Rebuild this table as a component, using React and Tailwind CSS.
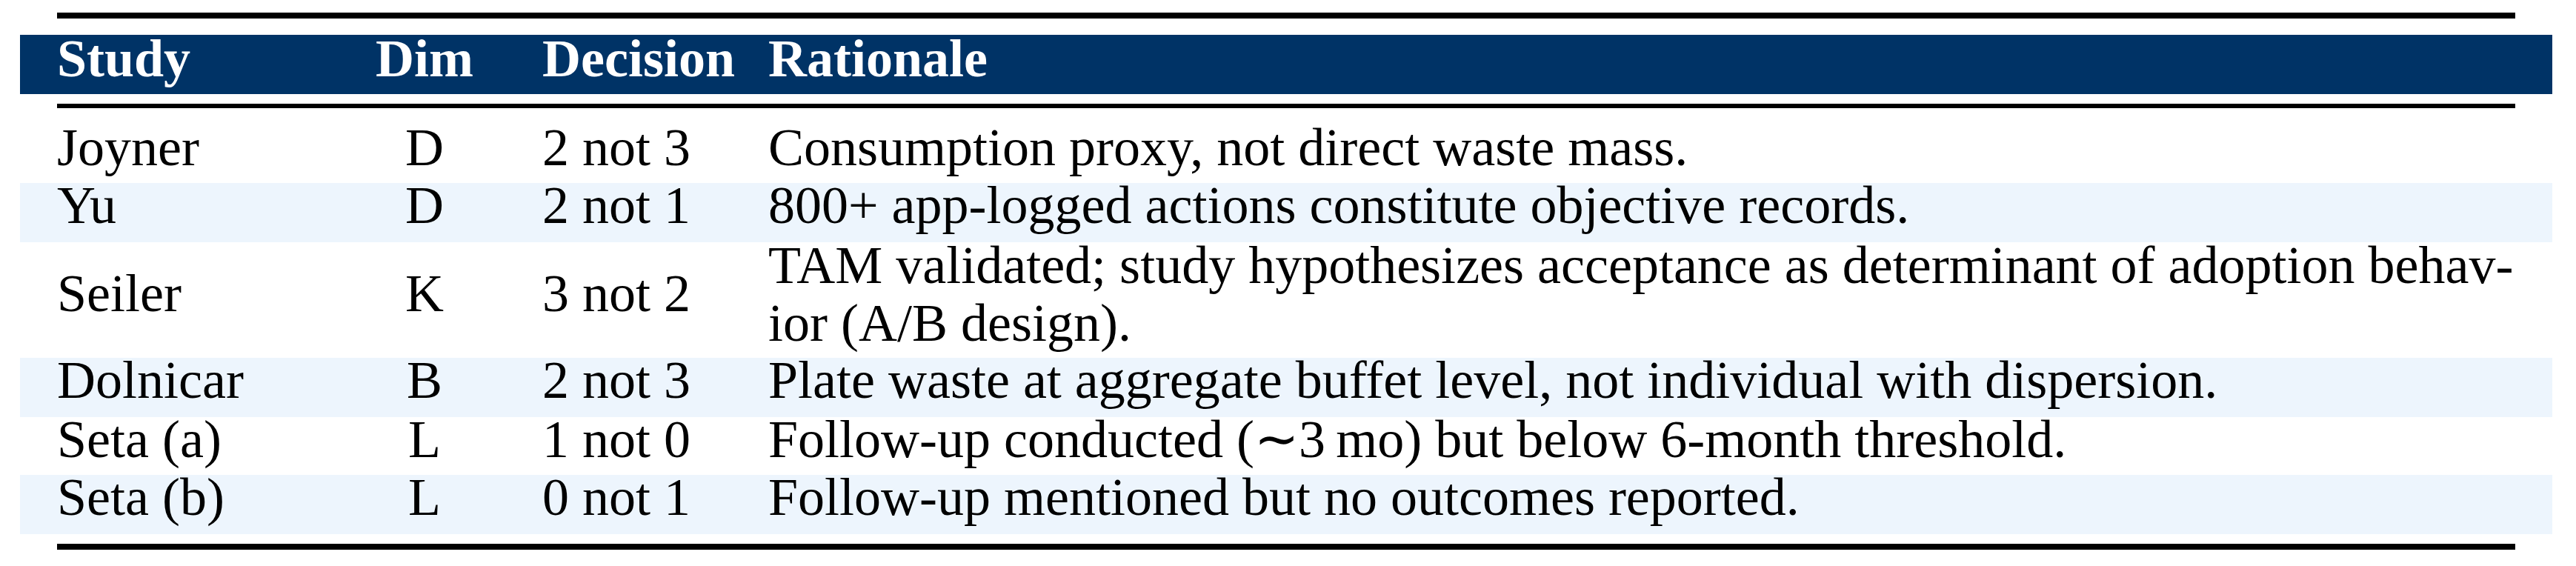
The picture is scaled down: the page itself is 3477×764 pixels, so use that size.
const ROWS = [
  { study: 'Joyner', dim: 'D', decision: '2 not 3', rationale: ['Consumption proxy, not direct waste mass.'], h: 'h-[78px]', shaded: false },
  { study: 'Yu', dim: 'D', decision: '2 not 1', rationale: ['800+ app-logged actions constitute objective records.'], h: 'h-[80px]', shaded: true },
  {
    study: 'Seiler',
    dim: 'K',
    decision: '3 not 2',
    rationale: [
      'TAM validated; study hypothesizes acceptance as determinant of adoption behav-',
      'ior (A/B design).'
    ],
    h: 'h-[156px]',
    shaded: false
  },
  { study: 'Dolnicar', dim: 'B', decision: '2 not 3', rationale: ['Plate waste at aggregate buffet level, not individual with dispersion.'], h: 'h-[80px]', shaded: true },
  { study: 'Seta (a)', dim: 'L', decision: '1 not 0', rationale: ['Follow-up conducted (\u223C3\u2009mo) but below 6-month threshold.'], h: 'h-[78px]', shaded: false },
  { study: 'Seta (b)', dim: 'L', decision: '0 not 1', rationale: ['Follow-up mentioned but no outcomes reported.'], h: 'h-[80px]', shaded: true }
]

const GRID = 'grid grid-cols-[401px_190px_369px_1fr] px-[50px]'

function Row({ row }) {
  const multi = row.rationale.length > 1
  // single-line cells sit on the first baseline; in the two-line row they drop to the middle
  const side = multi ? 'pt-[39px]' : ''
  return (
    <div className={`${GRID} ${row.h} ${row.shaded ? 'bg-[#edf5fd]' : ''} leading-[60px]`}>
      <div className={side}>{row.study}</div>
      <div className={`text-center ${side}`}>{row.dim}</div>
      <div className={`pl-[64px] ${side}`}>{row.decision}</div>
      <div className={multi ? 'leading-[78px] -mt-[8px]' : ''}>
        {row.rationale.map((line, i) => (
          <div key={i} className="whitespace-nowrap">{line}</div>
        ))}
      </div>
    </div>
  )
}

export default function App() {
  return (
    <div className="w-[3477px] h-[764px] bg-white pt-[17px] pl-[27px] text-black text-[72px] font-['Liberation_Serif',serif]">
      <div className="w-[3418px]">
        {/* top rule */}
        <div className="mx-[50px] h-[8px] bg-black" />

        {/* header band */}
        <div className={`${GRID} mt-[22px] h-[80px] bg-[#003366] text-white font-bold leading-[60px] pt-[2px]`}>
          <div>Study</div>
          <div className="text-center">Dim</div>
          <div className="pl-[64px]">Decision</div>
          <div>Rationale</div>
        </div>

        {/* mid rule */}
        <div className="mx-[50px] mt-[13px] h-[6px] bg-black" />

        <div className="mt-[23px]">
          {ROWS.map((row) => (
            <Row key={row.study} row={row} />
          ))}
        </div>

        {/* bottom rule */}
        <div className="mx-[50px] mt-[13px] h-[8px] bg-black" />
      </div>
    </div>
  )
}
